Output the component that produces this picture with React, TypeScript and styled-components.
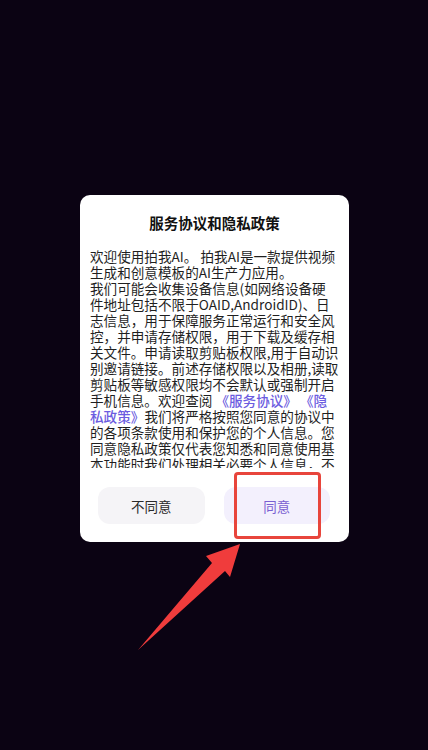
import React, { FC } from 'react';
import styled, { createGlobalStyle } from 'styled-components';

const GlobalStyle = createGlobalStyle`
  html, body {
    margin: 0;
    padding: 0;
    background: #0b0313;
  }

  body {
    font-family: "Noto Sans CJK SC", "Noto Sans", sans-serif;
  }
`;

const Screen = styled.main`
  position: relative;
  width: 428px;
  height: 750px;
  padding-top: 195px;
  padding-left: 80px;
  box-sizing: border-box;
  background: #0b0313;
  overflow: hidden;
`;

const Dialog = styled.section`
  width: 269px;
  box-sizing: border-box;
  padding: 18px 0 18px;
  background: #ffffff;
  border-radius: 10px;
  display: flex;
  flex-direction: column;
`;

const Title = styled.h1`
  margin: 0;
  font-size: 14.5px;
  line-height: 20px;
  font-weight: 700;
  color: #111111;
  text-align: center;
`;

const Body = styled.div`
  margin: 15px 0 0 10px;
  width: 248.7px;
  height: 220px;
  overflow: hidden;
  font-size: 13.6px;
  line-height: 16px;
  color: #1f1f1f;

  p {
    margin: 0;
  }
`;

const Link = styled.span`
  color: #6b5ce0;
  font-weight: 500;
`;

const Actions = styled.div`
  display: flex;
  gap: 19px;
  margin-top: 19px;
  padding: 0 19px 0 18px;
`;

const ActionButton = styled.button<{ $primary?: boolean }>`
  position: relative;
  flex: 1;
  height: 37px;
  border: none;
  border-radius: 12px;
  font-family: inherit;
  font-size: 13.5px;
  background: ${(p) => (p.$primary ? '#f3f0fd' : '#f5f4f7')};
  color: ${(p) => (p.$primary ? '#7a5fd2' : '#2a2a2a')};
`;

const Highlight = styled.span`
  position: absolute;
  top: -15px;
  bottom: -15px;
  left: 10px;
  right: 9px;
  border: 3px solid #e8453c;
  border-radius: 4px;
  pointer-events: none;
`;

const Arrow = styled.svg`
  position: absolute;
  left: 130px;
  top: 540px;
  width: 120px;
  height: 120px;
`;

const App: FC = () => (
  <>
    <GlobalStyle />
    <Screen>
      <Dialog>
        <Title>服务协议和隐私政策</Title>
        <Body>
          <p>欢迎使用拍我AI。 拍我AI是一款提供视频生成和创意模板的AI生产力应用。</p>
          <p>
            我们可能会收集设备信息(如网络设备硬件地址包括不限于OAID,AndroidID)、日志信息，用于保障服务正常运行和安全风控，并申请存储权限，用于下载及缓存相关文件。申请读取剪贴板权限,用于自动识别邀请链接。前述存储权限以及相册,读取剪贴板等敏感权限均不会默认或强制开启手机信息。欢迎查阅{' '}
            <Link>《服务协议》</Link> <Link>《隐私政策》</Link>
            我们将严格按照您同意的协议中的各项条款使用和保护您的个人信息。您同意隐私政策仅代表您知悉和同意使用基本功能时我们处理相关必要个人信息，不会因此强制收集其他个人信息。
          </p>
        </Body>
        <Actions>
          <ActionButton>不同意</ActionButton>
          <ActionButton $primary>
            同意
            <Highlight />
          </ActionButton>
        </Actions>
      </Dialog>
      <Arrow viewBox="0 0 120 120">
        <polygon
          points="110,4 100,37 95,31 8,110 82,23 76,16"
          fill="#f03c3c"
        />
      </Arrow>
    </Screen>
  </>
);

export default App;
